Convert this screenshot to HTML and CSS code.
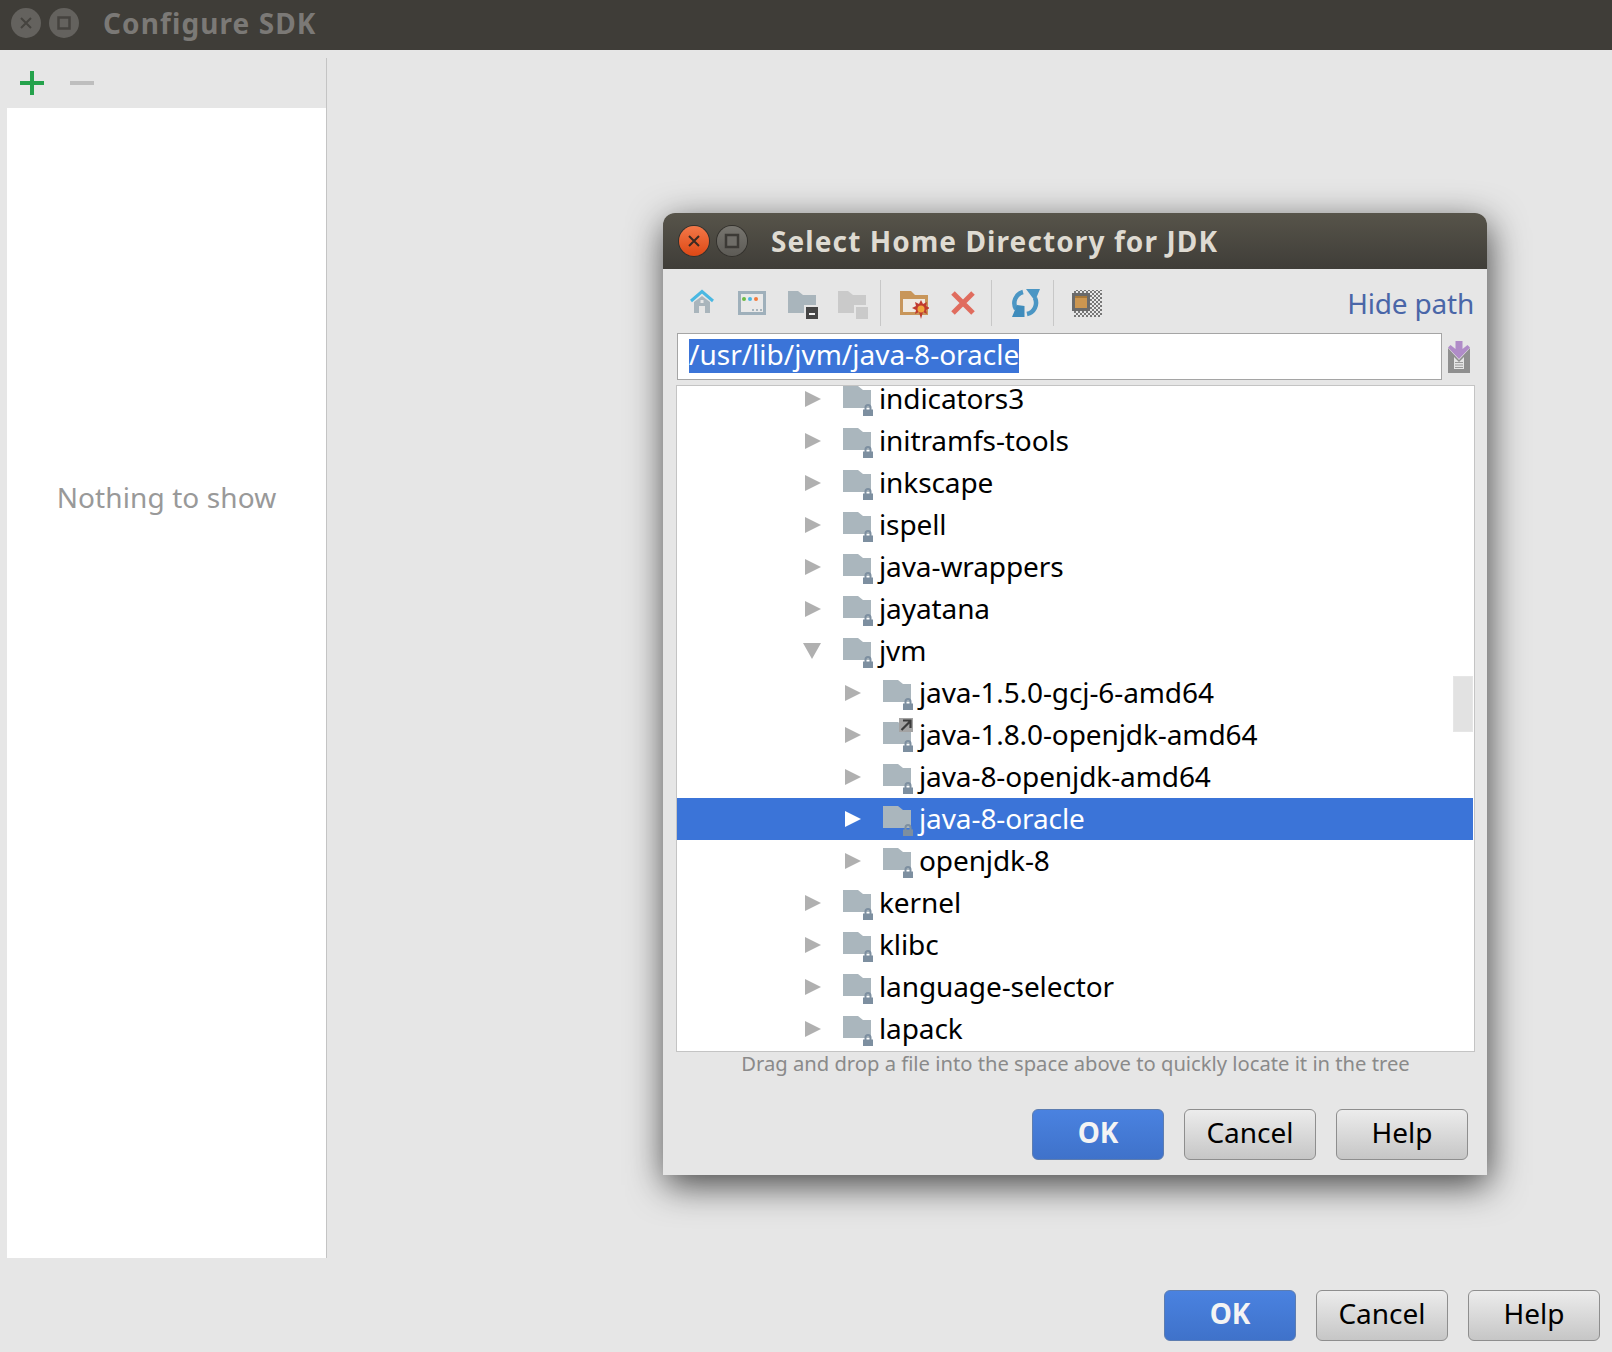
FILE: index.html
```html
<!DOCTYPE html>
<html lang="en">
<head>
    <meta charset="UTF-8">
    <meta name="viewport" content="width=device-width, initial-scale=1.0">
    <title>Configure SDK</title>
    <link rel="stylesheet" href="styles.css">
</head>
<body>
    <svg class="defs" width="0" height="0">
        <defs>
            <pattern id="checker" width="4" height="4" patternUnits="userSpaceOnUse">
                <rect width="4" height="4" fill="#e8e8e8"/>
                <rect width="2" height="2" fill="#777"/>
                <rect x="2" y="2" width="2" height="2" fill="#777"/>
            </pattern>
            <symbol id="right" viewBox="0 0 16 16"><path d="M0 0L16 8L0 16z"/></symbol>
            <symbol id="down" viewBox="0 0 18 16"><path d="M0 0H18L9 16z"/></symbol>
            <symbol id="folder" viewBox="0 0 32 36">
                <path class="folder-body" d="M0 5H15L20 9H28V27H0z"/>
                <path class="folder-lock" d="M20 35V28.500H21.500V26.500A3.500 3.500 0 0 1 28.500 26.500V28.500H30V35zM23.500 28.500H26.500V26.500A1.500 1.500 0 0 0 23.500 26.500z"/>
            </symbol>
        </defs>
    </svg>

    <div class="window">
        <div class="titlebar">
            <span class="win-btn win-btn-dim">
                <svg width="16" height="16" viewBox="0 0 16 16"><path d="M3 3L13 13M13 3L3 13" stroke="#45433f" stroke-width="2"/></svg>
            </span>
            <span class="win-btn win-btn-dim">
                <svg width="14" height="14" viewBox="0 0 14 14"><rect x="1.500" y="1.500" width="11" height="11" fill="#64625e" stroke="#45433f" stroke-width="2.500"/></svg>
            </span>
            <span class="title title-dim">Configure SDK</span>
        </div>

        <div class="main">
            <div class="sidebar">
                <div class="side-tools">
                    <svg width="24" height="24" viewBox="0 0 24 24"><path d="M10 0H14V10H24V14H14V24H10V14H0V10H10z" fill="#25a24c"/></svg>
                    <svg width="24" height="24" viewBox="0 0 24 24"><rect y="10" width="24" height="4" fill="#bebebe"/></svg>
                </div>
                <div class="side-list">Nothing to show</div>
            </div>
        </div>

        <div class="buttons buttons-main">
            <button class="btn btn-primary">OK</button>
            <button class="btn">Cancel</button>
            <button class="btn">Help</button>
        </div>
    </div>

    <div class="dialog">
        <div class="dialog-title">
            <span class="win-btn win-btn-close">
                <svg width="16" height="16" viewBox="0 0 16 16"><path d="M3 3L13 13M13 3L3 13" stroke="#3a2a22" stroke-width="2"/></svg>
            </span>
            <span class="win-btn win-btn-max">
                <svg width="16" height="16" viewBox="0 0 16 16"><rect x="2" y="2" width="12" height="12" fill="#6f6d68" stroke="#3c3a36" stroke-width="2.500"/></svg>
            </span>
            <span class="title">Select Home Directory for JDK</span>
        </div>

        <div class="dialog-body">
            <div class="toolbar">
                <!-- home -->
                <svg class="tool" viewBox="0 0 32 32">
                    <path d="M8 15L16 9L24 15V26H19V19H13V26H8z" fill="#a9b5bc"/>
                    <rect x="14.500" y="13" width="3" height="3" fill="#e6e6e6"/>
                    <path d="M5 14L16 4.500L27 14" fill="none" stroke="#4ab8e2" stroke-width="3"/>
                </svg>
                <!-- desktop -->
                <svg class="tool" viewBox="0 0 32 32">
                    <rect x="3.500" y="5.500" width="25" height="21" fill="#e9e9e9" stroke="#9fb0bb" stroke-width="3"/>
                    <circle cx="8" cy="12" r="2" fill="#6cbb45"/>
                    <circle cx="14" cy="12" r="2" fill="#4ab8e2"/>
                    <circle cx="20" cy="12" r="2" fill="#f47a3c"/>
                    <path d="M16 22h2v2h-2zM20 22h2v2h-2zM24 22h2v2h-2z" fill="#a9b5bc"/>
                </svg>
                <!-- new module folder -->
                <svg class="tool" viewBox="0 0 32 32">
                    <path d="M2 4H12L17 8H30V26H2z" fill="#a9b5bc"/>
                    <rect x="18" y="18" width="15" height="15" fill="#e6e6e6"/>
                    <rect x="20" y="20" width="12" height="12" fill="#454545"/>
                    <rect x="23" y="26" width="6" height="2" fill="#f2f2f2"/>
                </svg>
                <!-- new folder, disabled -->
                <svg class="tool" viewBox="0 0 32 32">
                    <path d="M2 4H12L17 8H30V26H2z" fill="#cacaca"/>
                    <rect x="18" y="18" width="15" height="15" fill="#e6e6e6"/>
                    <rect x="20" y="20" width="12" height="12" fill="#cacaca"/>
                </svg>
                <span class="tool-sep"></span>
                <!-- new folder -->
                <svg class="tool" viewBox="0 0 32 32">
                    <path d="M3 4H14L18 8H31V28H3z" fill="#c8965a"/>
                    <rect x="6" y="12" width="22" height="13" fill="#efe9e0"/>
                    <path d="M24 13L26 17L30 15L29 19L33 21L29 23L30 27L26 25L24 32L22 25L18 27L19 23L15 21L19 19L18 15L22 17z" fill="#c03a2e"/>
                    <circle cx="24" cy="22" r="3.500" fill="#f0a63c"/>
                </svg>
                <!-- delete -->
                <svg class="tool" viewBox="0 0 32 32">
                    <path d="M6 6L26 26M26 6L6 26" stroke="#e06c5e" stroke-width="5"/>
                </svg>
                <span class="tool-sep"></span>
                <!-- refresh -->
                <svg class="tool tool-refresh" viewBox="0 0 32 32">
                    <path d="M14 5A11.500 11.500 0 0 0 7 22" fill="none" stroke="#4b96c4" stroke-width="4.500"/>
                    <path d="M26 11A11.500 11.500 0 0 1 18 27" fill="none" stroke="#4b96c4" stroke-width="4.500"/>
                    <path d="M17 2H31L26 14z" fill="#4b96c4"/>
                    <path d="M3 30H15.500V19L8 18z" fill="#3f8cbc"/>
                </svg>
                <span class="tool-sep"></span>
                <!-- hide empty middle packages -->
                <svg class="tool" viewBox="0 0 32 32">
                    <rect x="4" y="3" width="28" height="27" fill="url(#checker)"/>
                    <rect x="3.500" y="7.500" width="15" height="15" fill="#e6e6e6" stroke="#6a6a6a" stroke-width="3"/>
                    <rect x="5" y="9" width="12" height="12" fill="#cc9650"/>
                    <rect x="5" y="9" width="12" height="2" fill="#a87838"/>
                </svg>
                <a class="hide-path">Hide path</a>
            </div>

            <div class="path-row">
                <div class="path-input"><span class="path-sel">/usr/lib/jvm/java-8-oracle</span></div>
                <svg class="path-icon" width="22" height="32" viewBox="0 0 22 32">
                    <path d="M0 7L11 19L22 7V32H0z" fill="#8f8f8f"/>
                    <path d="M6 16L11 21L16 16V28H6z" fill="#e4e4e4"/>
                    <path d="M7 21.500H15M7 24H15M7 26.500H15" stroke="#9a9a9a"/>
                    <path d="M7.500 0H14.500V8L19.500 4L22 6.500L11 18L0 6.500L2.500 4L7.500 8z" fill="#b08cc8"/>
                </svg>
            </div>

            <div class="tree">
                <div class="tree-scroll"></div>
                <div class="row lvl1"><svg class="arrow"><use href="#right"/></svg><svg class="node"><use href="#folder"/></svg><span>indicators3</span></div>
                <div class="row lvl1"><svg class="arrow"><use href="#right"/></svg><svg class="node"><use href="#folder"/></svg><span>initramfs-tools</span></div>
                <div class="row lvl1"><svg class="arrow"><use href="#right"/></svg><svg class="node"><use href="#folder"/></svg><span>inkscape</span></div>
                <div class="row lvl1"><svg class="arrow"><use href="#right"/></svg><svg class="node"><use href="#folder"/></svg><span>ispell</span></div>
                <div class="row lvl1"><svg class="arrow"><use href="#right"/></svg><svg class="node"><use href="#folder"/></svg><span>java-wrappers</span></div>
                <div class="row lvl1"><svg class="arrow"><use href="#right"/></svg><svg class="node"><use href="#folder"/></svg><span>jayatana</span></div>
                <div class="row lvl1"><svg class="arrow arrow-down"><use href="#down"/></svg><svg class="node"><use href="#folder"/></svg><span>jvm</span></div>
                <div class="row lvl2"><svg class="arrow"><use href="#right"/></svg><svg class="node"><use href="#folder"/></svg><span>java-1.5.0-gcj-6-amd64</span></div>
                <div class="row lvl2"><svg class="arrow"><use href="#right"/></svg><span class="node-wrap"><svg class="node"><use href="#folder"/></svg><svg class="link-badge" viewBox="0 0 14 14"><rect width="14" height="14" fill="#a3a3a3"/><path d="M2.500 12L11 3.500M4 2.500H11.500V10" fill="none" stroke="#3c3c3c" stroke-width="2.200"/></svg></span><span>java-1.8.0-openjdk-amd64</span></div>
                <div class="row lvl2"><svg class="arrow"><use href="#right"/></svg><svg class="node"><use href="#folder"/></svg><span>java-8-openjdk-amd64</span></div>
                <div class="row lvl2 row-selected"><svg class="arrow"><use href="#right"/></svg><svg class="node"><use href="#folder"/></svg><span>java-8-oracle</span></div>
                <div class="row lvl2"><svg class="arrow"><use href="#right"/></svg><svg class="node"><use href="#folder"/></svg><span>openjdk-8</span></div>
                <div class="row lvl1"><svg class="arrow"><use href="#right"/></svg><svg class="node"><use href="#folder"/></svg><span>kernel</span></div>
                <div class="row lvl1"><svg class="arrow"><use href="#right"/></svg><svg class="node"><use href="#folder"/></svg><span>klibc</span></div>
                <div class="row lvl1"><svg class="arrow"><use href="#right"/></svg><svg class="node"><use href="#folder"/></svg><span>language-selector</span></div>
                <div class="row lvl1"><svg class="arrow"><use href="#right"/></svg><svg class="node"><use href="#folder"/></svg><span>lapack</span></div>
            </div>

            <div class="hint">Drag and drop a file into the space above to quickly locate it in the tree</div>

            <div class="buttons buttons-dialog">
                <button class="btn btn-primary">OK</button>
                <button class="btn">Cancel</button>
                <button class="btn">Help</button>
            </div>
        </div>
    </div>
</body>
</html>
```

FILE: styles.css
```css
* {
    box-sizing: border-box;
}
html, body {
    margin: 0;
    height: 1352px;
    overflow: hidden;
}
body {
    background-color: #e6e6e6;
    color: #000;
    font-family: "Noto Sans", sans-serif;
    font-size: 28px;
}
.defs {
    position: absolute;
}

/* main window */
.window {
    height: 1352px;
    display: flex;
    flex-direction: column;
}
.titlebar {
    height: 50px;
    flex: none;
    background-color: #3f3d38;
    display: flex;
    align-items: center;
    padding: 0 0 4px 11px;
    gap: 8px;
}
.win-btn {
    width: 30px;
    height: 30px;
    border-radius: 50%;
    display: flex;
    align-items: center;
    justify-content: center;
    flex: none;
}
.win-btn-dim {
    background-color: #64625e;
}
.win-btn-close {
    background: linear-gradient(#f47848, #dd4815);
    box-shadow: 0 0 0 1px #33312d;
}
.win-btn-max {
    background: linear-gradient(#77756f, #5d5b56);
    box-shadow: 0 0 0 1px #33312d;
}
.title {
    font-weight: bold;
    color: #dfdbd2;
    letter-spacing: 1.1px;
    font-size: 28px;
}
.title-dim {
    color: #7b7976;
    margin-left: 16px;
}
.main {
    flex: 1;
    display: flex;
    min-height: 0;
}
.sidebar {
    width: 327px;
    margin-top: 8px;
    padding-left: 7px;
    border-right: 1px solid #c4c4c4;
    display: flex;
    flex-direction: column;
}
.side-tools {
    height: 50px;
    flex: none;
    display: flex;
    align-items: center;
    gap: 26px;
    padding-left: 13px;
}
.side-list {
    flex: 1;
    background-color: #fff;
    color: #999;
    text-align: center;
    padding-top: 367px;
    line-height: 44px;
    font-size: 28px;
    letter-spacing: 0.1px;
}

/* buttons */
.buttons {
    display: flex;
    justify-content: flex-end;
    gap: 20px;
}
.buttons-main {
    flex: none;
    height: 94px;
    padding: 32px 12px 0 0;
}
.buttons-dialog {
    padding-right: 6px;
}
.btn {
    width: 132px;
    height: 51px;
    border: 1px solid #8e8e8e;
    border-radius: 6px;
    background: linear-gradient(#ececec, #c6c6c6);
    font-family: inherit;
    font-size: 28px;
    color: #000;
    padding: 0 0 5px;
}
.btn-primary {
    background: linear-gradient(#4a82e0, #3f72ca);
    border-color: #5d7db0;
    color: #f4f4f4;
    font-weight: bold;
}

/* file chooser */
.dialog {
    position: absolute;
    left: 663px;
    top: 213px;
    width: 824px;
    height: 962px;
    background-color: #e6e6e6;
    border-radius: 12px 12px 0 0;
    box-shadow: 2px 10px 36px rgba(0, 0, 0, 0.7);
    display: flex;
    flex-direction: column;
}
.dialog-title {
    height: 56px;
    flex: none;
    border-radius: 12px 12px 0 0;
    background: linear-gradient(#57544a, #3f3d38);
    display: flex;
    align-items: center;
    padding: 2px 0 2px 16px;
    gap: 8px;
}
.dialog-title .title {
    margin-left: 16px;
}
.dialog-body {
    flex: 1;
    padding: 0 13px 0 14px;
    display: flex;
    flex-direction: column;
}
.toolbar {
    height: 64px;
    flex: none;
    display: flex;
    align-items: center;
    gap: 18px;
    padding: 4px 0 0 9px;
}
.tool {
    width: 32px;
    height: 32px;
    flex: none;
}
.tool-refresh {
    margin-left: 1px;
}
.tool-sep {
    width: 1px;
    height: 46px;
    margin: 0 -2px 0 -6px;
    background-color: #c8c8c8;
    flex: none;
}
.hide-path {
    margin-left: auto;
    color: #4a66a8;
    font-size: 28px;
    letter-spacing: -0.2px;
}
.path-row {
    display: flex;
    align-items: center;
    gap: 6px;
    height: 47px;
    flex: none;
}
.path-input {
    flex: 1;
    height: 47px;
    background-color: #fff;
    border: 1px solid #a5a5a5;
    padding: 5px 11px;
    line-height: 30px;
}
.path-sel {
    display: inline-block;
    background-color: #3b74d8;
    color: #fff;
    height: 34px;
}
.path-icon {
    flex: none;
    margin-right: 4px;
}
.tree {
    position: relative;
    height: 667px;
    margin: 5px -1px 0;
    border: 1px solid #c4c4c4;
    background-color: #fff;
    flex: none;
}
.tree-scroll {
    position: absolute;
    right: 1px;
    top: 290px;
    width: 20px;
    height: 56px;
    background-color: #e2e2e2;
    border: 1px solid #e6e6e6;
}
.row {
    height: 42px;
    display: flex;
    align-items: center;
    position: relative;
    margin-right: 1px;
}
.row span:last-child {
    line-height: 24px;
    margin-bottom: 2px;
    letter-spacing: -0.1px;
}
/* the list is scrolled a little, so the first row is short */
.tree-scroll + .row {
    height: 34px;
    padding-bottom: 8px;
}
.lvl1 {
    padding-left: 128px;
}
.lvl2 {
    padding-left: 168px;
}
.arrow {
    width: 16px;
    height: 16px;
    margin-right: 22px;
    fill: #b0b0b0;
    flex: none;
    overflow: visible;
}
.arrow-down {
    width: 18px;
    margin-left: -2px;
}
.node {
    width: 32px;
    height: 36px;
    flex: none;
    display: block;
}
.node + span,
.node-wrap + span {
    margin-left: 4px;
}
.folder-body {
    fill: #aab6bd;
}
.folder-lock {
    fill: #7d8fa0;
}
.node-wrap {
    position: relative;
    flex: none;
}
.link-badge {
    position: absolute;
    left: 16px;
    top: 1px;
    width: 14px;
    height: 14px;
}
.row-selected {
    background-color: #3b74d8;
    color: #fff;
}
.row-selected .arrow {
    fill: #fff;
}
.row-selected .folder-body {
    fill: #8299bd;
}
.row-selected .folder-lock {
    fill: #6b7a8e;
}
.hint {
    height: 57px;
    flex: none;
    text-align: center;
    color: #8a8a8a;
    font-size: 20.2px;
    line-height: 22px;
}
```
